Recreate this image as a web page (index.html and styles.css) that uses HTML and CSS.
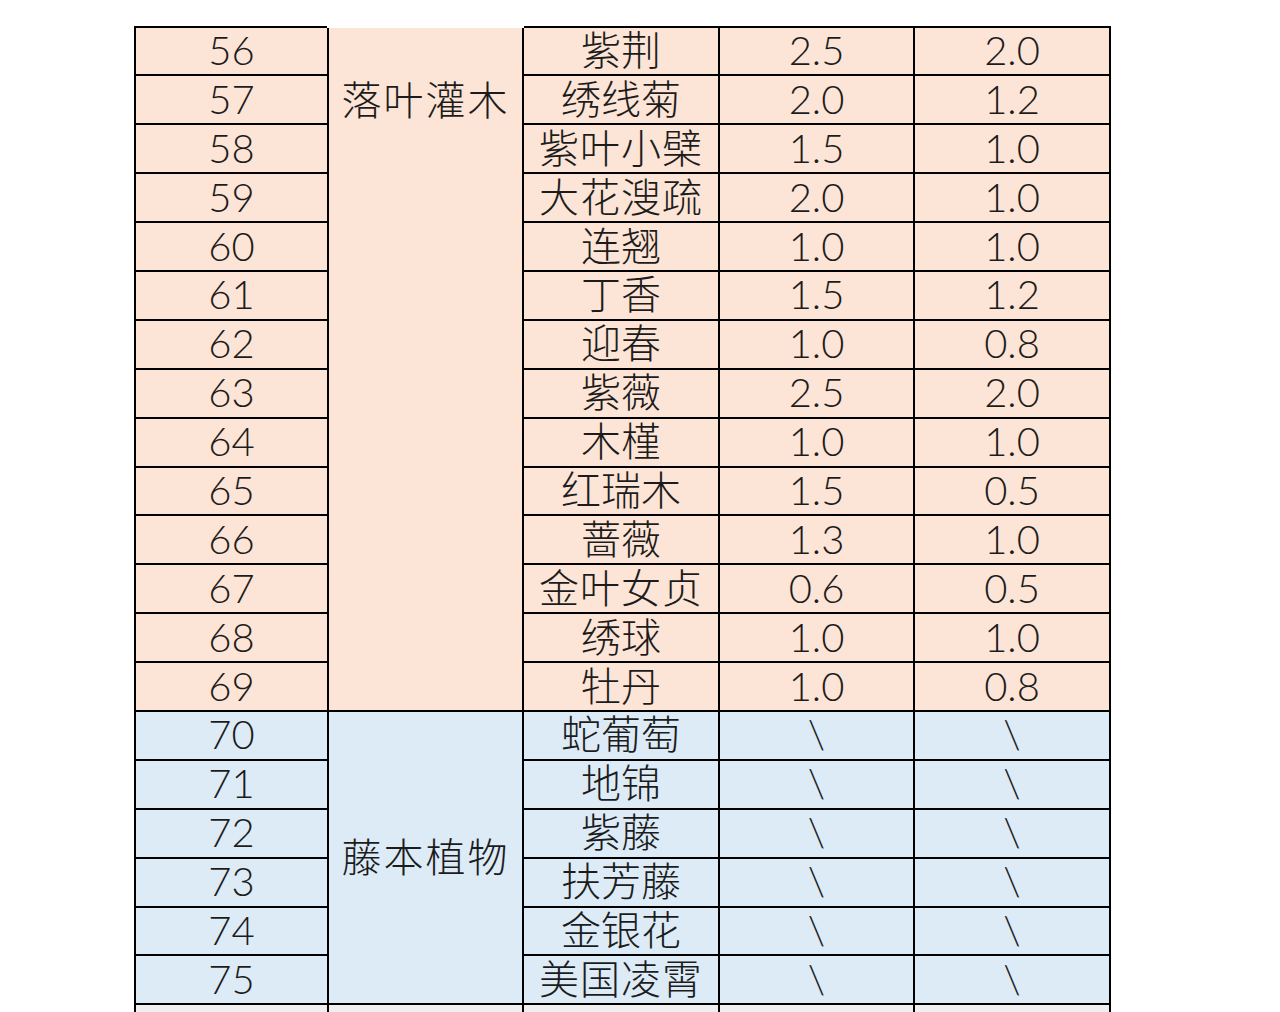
FILE: index.html
```html
<!DOCTYPE html>
<html lang="zh">
<head>
<meta charset="utf-8">
<title>植物表</title>
<link rel="stylesheet" href="styles.css">
</head>
<body>
<table class="sheet">
  <colgroup>
    <col class="c1"><col class="c2"><col class="c3"><col class="c4"><col class="c5">
  </colgroup>
  <tbody>
    <tr class="peach"><td>56</td><td class="group group-top" rowspan="14"><span class="label-top">落叶灌木</span></td><td>紫荆</td><td>2.5</td><td>2.0</td></tr>
    <tr class="peach"><td>57</td><td>绣线菊</td><td>2.0</td><td>1.2</td></tr>
    <tr class="peach"><td>58</td><td class="wide">紫叶小檗</td><td>1.5</td><td>1.0</td></tr>
    <tr class="peach"><td>59</td><td class="wide">大花溲疏</td><td>2.0</td><td>1.0</td></tr>
    <tr class="peach"><td>60</td><td>连翘</td><td>1.0</td><td>1.0</td></tr>
    <tr class="peach"><td>61</td><td>丁香</td><td>1.5</td><td>1.2</td></tr>
    <tr class="peach"><td>62</td><td>迎春</td><td>1.0</td><td>0.8</td></tr>
    <tr class="peach"><td>63</td><td>紫薇</td><td>2.5</td><td>2.0</td></tr>
    <tr class="peach"><td>64</td><td>木槿</td><td>1.0</td><td>1.0</td></tr>
    <tr class="peach"><td>65</td><td>红瑞木</td><td>1.5</td><td>0.5</td></tr>
    <tr class="peach"><td>66</td><td>蔷薇</td><td>1.3</td><td>1.0</td></tr>
    <tr class="peach"><td>67</td><td class="wide">金叶女贞</td><td>0.6</td><td>0.5</td></tr>
    <tr class="peach"><td>68</td><td>绣球</td><td>1.0</td><td>1.0</td></tr>
    <tr class="peach"><td>69</td><td>牡丹</td><td>1.0</td><td>0.8</td></tr>
    <tr class="blue"><td>70</td><td class="group" rowspan="6">藤本植物</td><td>蛇葡萄</td><td>\</td><td>\</td></tr>
    <tr class="blue"><td>71</td><td>地锦</td><td>\</td><td>\</td></tr>
    <tr class="blue"><td>72</td><td>紫藤</td><td>\</td><td>\</td></tr>
    <tr class="blue"><td>73</td><td>扶芳藤</td><td>\</td><td>\</td></tr>
    <tr class="blue"><td>74</td><td>金银花</td><td>\</td><td>\</td></tr>
    <tr class="blue"><td>75</td><td class="wide">美国凌霄</td><td>\</td><td>\</td></tr>
    <tr class="grey"><td></td><td></td><td class="peek">醉鱼草</td><td></td><td></td></tr>
  </tbody>
</table>
</body>
</html>
```

FILE: styles.css
```css
html, body {
  margin: 0;
  padding: 0;
  background: #ffffff;
  height: 1012px;
  overflow: hidden;
}

.sheet {
  margin: 25px 0 0 134px;
  border-collapse: collapse;
  table-layout: fixed;
  width: 977px;
  font-family: Lato, "Noto Sans CJK SC", sans-serif;
  font-weight: 300;
  font-size: 40px;
  color: #1c1c1c;
}

.c1 { width: 193px; }
.c2 { width: 195px; }
.c3 { width: 196px; }
.c4 { width: 195px; }
.c5 { width: 196px; }

.sheet td {
  border: 2px solid #000000;
  height: 44.9px;
  padding: 0 0 2px 0;
  text-align: center;
  vertical-align: middle;
  line-height: 40px;
  white-space: nowrap;
  overflow: visible;
}

.sheet td.wide {
  letter-spacing: 1px;
}

.peach td { background: #fce4d6; }
.blue td { background: #ddebf7; }
.grey td { background: #efefef; vertical-align: top; }

.sheet td.peek {
  padding: 6px 0 0 0;
  line-height: 40px;
}

.sheet td.group {
  letter-spacing: 2px;
}

.sheet td.group-top {
  vertical-align: top;
  border-top: 3px solid #ffffff;
  padding-top: 52px;
}

.label-top {
  display: block;
  line-height: 40px;
}
```
